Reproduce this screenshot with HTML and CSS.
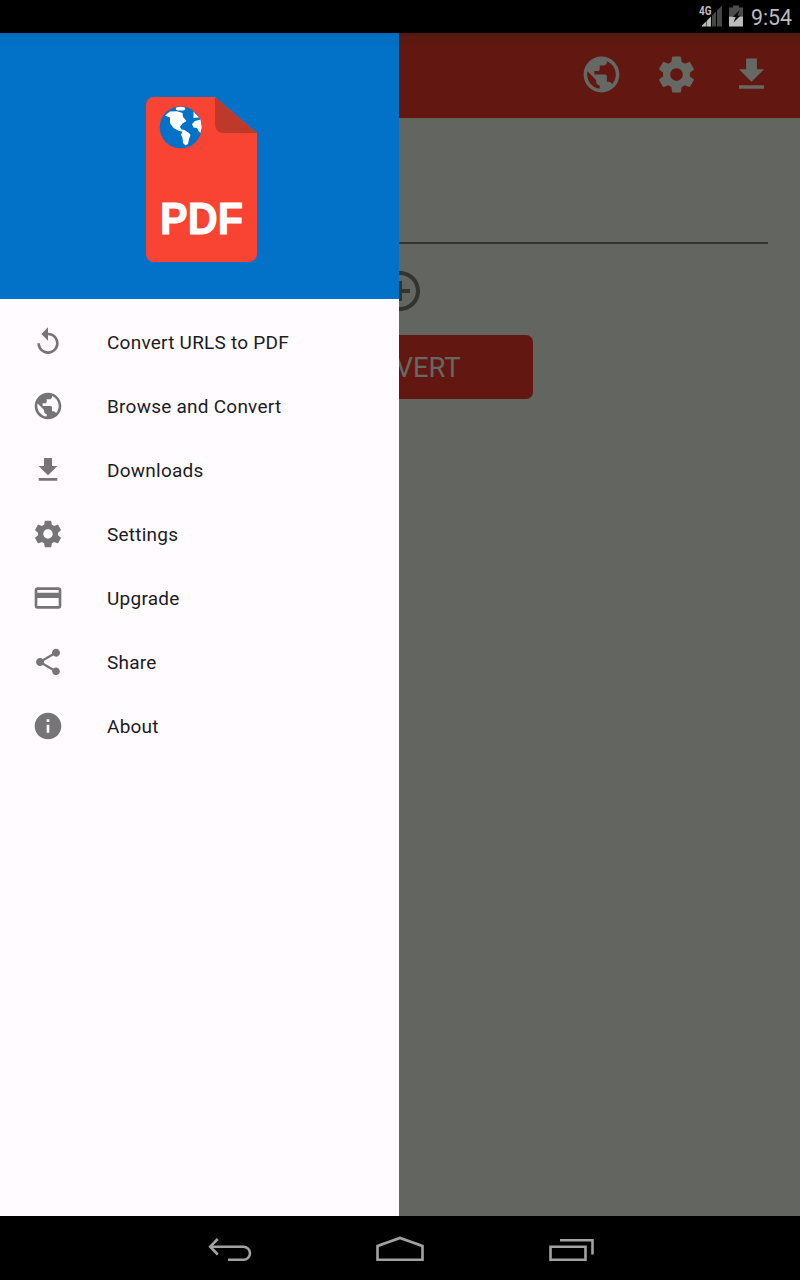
FILE: index.html
```html
<!DOCTYPE html>
<html lang="en">
<head>
<meta charset="utf-8">
<title>PDF Converter</title>
<link rel="stylesheet" href="styles.css">
</head>
<body>
<svg class="defs" aria-hidden="true">
  <symbol id="globe" viewBox="0 0 24 24"><path d="M12 2C6.48 2 2 6.48 2 12s4.48 10 10 10 10-4.48 10-10S17.52 2 12 2zm-1 17.93c-3.95-.49-7-3.85-7-7.93 0-.62.08-1.21.21-1.79L9 15v1c0 1.1.9 2 2 2v1.93zm6.9-2.54c-.26-.81-1-1.39-1.9-1.39h-1v-3c0-.55-.45-1-1-1H8v-2h2c.55 0 1-.45 1-1V7h2c1.1 0 2-.9 2-2v-.41c2.93 1.19 5 4.06 5 7.41 0 2.08-.8 3.97-2.1 5.39z"/></symbol>
  <symbol id="gear" viewBox="0 0 24 24"><path d="M19.43 12.98c.04-.32.07-.64.07-.98s-.03-.66-.07-.98l2.11-1.65c.19-.15.24-.42.12-.64l-2-3.46c-.12-.22-.39-.3-.61-.22l-2.49 1c-.52-.4-1.08-.73-1.69-.98l-.38-2.65C14.46 2.18 14.25 2 14 2h-4c-.25 0-.46.18-.49.42l-.38 2.65c-.61.25-1.17.59-1.69.98l-2.49-1c-.23-.09-.49 0-.61.22l-2 3.46c-.13.22-.07.49.12.64l2.11 1.65c-.04.32-.07.65-.07.98s.03.66.07.98l-2.11 1.65c-.19.15-.24.42-.12.64l2 3.46c.12.22.39.3.61.22l2.49-1c.52.4 1.08.73 1.69.98l.38 2.65c.03.24.24.42.49.42h4c.25 0 .46-.18.49-.42l.38-2.65c.61-.25 1.17-.59 1.69-.98l2.49 1c.23.09.49 0 .61-.22l2-3.46c.12-.22.07-.49-.12-.64l-2.11-1.65zM12 15.5c-1.93 0-3.5-1.57-3.5-3.5s1.57-3.5 3.5-3.5 3.5 1.57 3.5 3.5-1.57 3.5-3.5 3.5z"/></symbol>
  <symbol id="download" viewBox="0 0 24 24"><path d="M19 9h-4V3H9v6H5l7 7 7-7zM5 18v2h14v-2H5z"/></symbol>
  <symbol id="replay" viewBox="0 0 24 24"><path d="M12 5V1L7 6l5 5V7c3.31 0 6 2.69 6 6s-2.69 6-6 6-6-2.69-6-6H4c0 4.42 3.58 8 8 8s8-3.58 8-8-3.58-8-8-8z"/></symbol>
  <symbol id="card" viewBox="0 0 24 24"><path d="M20 4H4c-1.11 0-1.99.89-1.99 2L2 18c0 1.11.89 2 2 2h16c1.11 0 2-.89 2-2V6c0-1.11-.89-2-2-2zm0 14H4v-6h16v6zm0-10H4V6h16v2z"/></symbol>
  <symbol id="share" viewBox="0 0 24 24"><path d="M18 16.080c-.76 0-1.440.3-1.960.77L8.910 12.700c.05-.23.09-.46.09-.7s-.04-.47-.09-.7l7.050-4.110c.54.5 1.250.81 2.040.81 1.660 0 3-1.340 3-3s-1.340-3-3-3-3 1.340-3 3c0 .24.04.47.09.7L8.040 9.810C7.500 9.310 6.790 9 6 9c-1.660 0-3 1.340-3 3s1.340 3 3 3c.79 0 1.500-.31 2.040-.81l7.120 4.160c-.05.21-.08.43-.08.65 0 1.610 1.310 2.920 2.920 2.920s2.920-1.310 2.920-2.920-1.310-2.920-2.920-2.920z"/></symbol>
  <symbol id="info" viewBox="0 0 24 24"><path d="M12 2C6.48 2 2 6.48 2 12s4.480 10 10 10 10-4.480 10-10S17.520 2 12 2zm1 15h-2v-6h2v6zm0-8h-2V7h2v2z"/></symbol>
  <symbol id="add" viewBox="0 0 24 24"><path d="M13 7h-2v4H7v2h4v4h2v-4h4v-2h-4V7zm-1-5C6.480 2 2 6.480 2 12s4.480 10 10 10 10-4.480 10-10S17.520 2 12 2zm0 18c-4.410 0-8-3.590-8-8s3.590-8 8-8 8 3.590 8 8-3.590 8-8 8z"/></symbol>
</svg>

<div class="device">
  <header class="status">
    <svg class="signal" viewBox="0 0 24 22">
      <path fill="#bcbcbc" d="M3 21.500V20.500L7.500 16V21.500zM8 21.500V15.500L12 11.500V21.500z"/>
      <path fill="#454745" d="M13 21.500V10.500L17 6.500V21.500zM18 21.500V5.500L23 0.500V21.500z"/>
      <text class="network" x="0" y="10" textLength="12.500" lengthAdjust="spacingAndGlyphs">4G</text>
    </svg>
    <svg class="battery" viewBox="0 0 14 22">
      <path fill="#4b4d4b" d="M4 .5h6V2.500h4v9H0v-9h4z"/>
      <path fill="#bcbcbc" d="M0 11.500h14V21.500H0z"/>
      <path fill="#0c0c0c" d="M10.800 5L3.500 12h3.200L4.500 17.500 11.500 10.500H8.500z"/>
    </svg>
    <span class="clock">9:54</span>
  </header>

  <main class="screen">
    <div class="toolbar">
      <svg class="action"><use href="#globe"/></svg>
      <svg class="action"><use href="#gear"/></svg>
      <svg class="action"><use href="#download"/></svg>
    </div>
    <div class="form">
      <div class="url-field"></div>
      <svg class="add"><use href="#add"/></svg>
      <div class="convert">CONVERT</div>
    </div>

    <aside class="drawer">
      <div class="banner">
        <svg class="logo" viewBox="0 0 111 165">
          <path fill="#f94333" d="M8 0H69L111 36V157a8 8 0 0 1-8 8H8a8 8 0 0 1-8-8V8a8 8 0 0 1 8-8z"/>
          <path fill="#bf392b" d="M69 0L111 36H77a8 8 0 0 1-8-8z"/>
          <circle cx="34.700" cy="30.300" r="21" fill="#0271c8"/>
          <g fill="#fff">
            <path d="M19 18.500L24 14.500 31 14.300 36.500 16 37 20 40.500 24 36.500 26.500 34 30 35.500 32.500 38.500 33 43 36 44.500 38 43 42 42 47 39.500 48.500 37 46 36.500 41 35 37.500 36.500 34.500 33 34 27.500 31 24 26 24 20.500z"/>
            <ellipse cx="34.500" cy="11.700" rx="4.800" ry="1.900"/>
            <path d="M47.500 14.500L53 20.500 47.500 21zM46 27L49 24 54.500 22.500 55.700 30 54.500 36 52.500 34 51 31 47.500 30.500z"/>
          </g>
          <text class="logo-text" x="14" y="136.500" textLength="83" lengthAdjust="spacingAndGlyphs">PDF</text>
        </svg>
      </div>
      <nav class="menu">
        <a class="item"><svg class="icon"><use href="#replay"/></svg><span>Convert URLS to PDF</span></a>
        <a class="item"><svg class="icon"><use href="#globe"/></svg><span>Browse and Convert</span></a>
        <a class="item"><svg class="icon"><use href="#download"/></svg><span>Downloads</span></a>
        <a class="item"><svg class="icon"><use href="#gear"/></svg><span>Settings</span></a>
        <a class="item"><svg class="icon"><use href="#card"/></svg><span>Upgrade</span></a>
        <a class="item"><svg class="icon"><use href="#share"/></svg><span>Share</span></a>
        <a class="item"><svg class="icon"><use href="#info"/></svg><span>About</span></a>
      </nav>
    </aside>
  </main>

  <footer class="navbar">
    <svg class="key" viewBox="0 0 50 30"><path d="M13.700 4L6.200 11.700l7.500 7.800M6.200 11.700H39.500a6.500 6.500 0 0 1 0 13H24"/></svg>
    <svg class="key" viewBox="0 0 50 30"><path d="M2.500 24.700V11L25 3 47.500 11V24.700z"/></svg>
    <svg class="key" viewBox="0 0 50 30"><path d="M4.500 11.700H39.500V24.700H4.500zM14 5.200H46.500V19.500"/></svg>
  </footer>
</div>
</body>
</html>
```

FILE: styles.css
```css
body {
  margin: 0;
  font-family: Roboto, "Noto Sans", sans-serif;
}

.defs {
  position: absolute;
  width: 0;
  height: 0;
}

.device {
  width: 800px;
  height: 1280px;
  display: flex;
  flex-direction: column;
  background: #000;
  overflow: hidden;
}

.status {
  height: 33px;
  box-sizing: border-box;
  padding: 0 8px 0 0;
  display: flex;
  justify-content: flex-end;
  align-items: flex-start;
}

.signal {
  width: 24px;
  height: 22px;
  margin: 5px 6px 0 0;
  overflow: visible;
}

.network {
  font: bold 12px Roboto, sans-serif;
  fill: #bcbcbc;
}

.battery {
  width: 14px;
  height: 22px;
  margin: 5px 8px 0 0;
}

.clock {
  color: #bcbcbc;
  font-size: 21.3px;
  line-height: 35px;
}

.screen {
  position: relative;
  flex: 1;
  background: #636561;
}

.toolbar {
  height: 85px;
  box-sizing: border-box;
  padding: 20px 27px 0 0;
  display: flex;
  justify-content: flex-end;
  gap: 32px;
  background: linear-gradient(#53170f 0, #591911 3px, #5c1911 12px, #621810 12px);
}

.action {
  width: 43px;
  height: 43px;
  fill: #666864;
}

.form {
  display: flex;
  flex-direction: column;
  align-items: center;
  padding: 0 32px;
}

.url-field {
  align-self: stretch;
  height: 124px;
  border-bottom: 2px solid #343634;
}

.add {
  width: 48px;
  height: 48px;
  margin-top: 23px;
  fill: #323432;
}

.convert {
  width: 266px;
  height: 64px;
  margin-top: 20px;
  border-radius: 7px;
  background: #621810;
  color: #666864;
  font-size: 27.4px;
  line-height: 67px;
  text-align: center;
}

.drawer {
  position: absolute;
  left: 0;
  top: 0;
  bottom: 0;
  width: 399px;
  background: #fffbff;
}

.banner {
  height: 266px;
  box-sizing: border-box;
  padding: 64px 0 0 146px;
  background: linear-gradient(#0267b7 0, #026fc4 4px, #026fc4 12px, #0271c8 12px);
}

.logo {
  display: block;
  width: 111px;
  height: 165px;
}

.logo-text {
  font: bold 44px "Liberation Sans", Arial, sans-serif;
  fill: #fff;
  stroke: #fff;
  stroke-width: 0.9px;
}

.menu {
  padding-top: 11px;
}

.item {
  display: flex;
  align-items: center;
  gap: 43px;
  height: 64px;
  padding-left: 32px;
  color: #1c1b1f;
  font-size: 19px;
  letter-spacing: 0.24px;
}

.icon {
  width: 32px;
  height: 32px;
  fill: #767477;
}

.navbar {
  height: 64px;
  box-sizing: border-box;
  padding-top: 4px;
  display: flex;
  justify-content: center;
  align-items: center;
  gap: 121px;
}

.key {
  width: 50px;
  height: 30px;
  fill: none;
  stroke: #a2a2a2;
  stroke-width: 2.6;
}
```
